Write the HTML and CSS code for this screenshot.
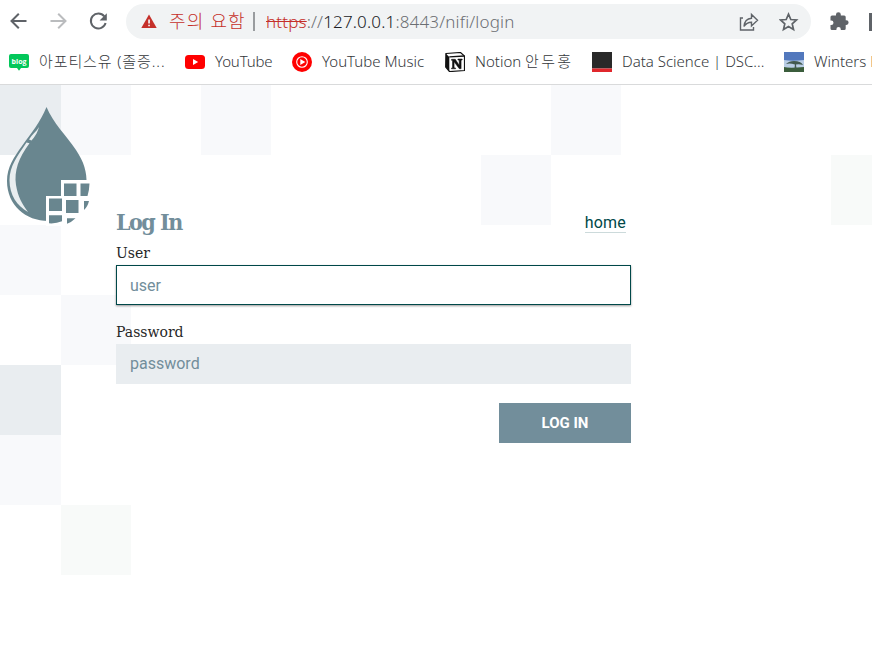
FILE: index.html
```html
<!DOCTYPE html>
<html lang="ko">
<head>
<meta charset="utf-8">
<title>NiFi Login</title>
<link rel="stylesheet" href="styles.css">
</head>
<body>
<header class="browser">
  <div class="toolbar">
    <svg class="nav" width="20" height="20" viewBox="0 0 20 20" fill="none" stroke="#5f6368" stroke-width="2"><path d="M18.500 9H3.500M10.800 1.700 3.500 9l7.300 7.300"/></svg>
    <svg class="nav" width="20" height="20" viewBox="0 0 20 20" fill="none" stroke="#babcbe" stroke-width="2"><path d="M2.500 9h15M10.200 1.700 17.500 9l-7.300 7.300"/></svg>
    <svg class="nav" width="20" height="20" viewBox="0 0 20 20" fill="none" stroke="#5f6368" stroke-width="2"><path d="M16.300 4.300A7.500 7.500 0 1 0 17.600 11"/><path d="M18.800 1.200v7.200h-7.200z" fill="#5f6368" stroke="none"/></svg>
    <div class="omnibox">
      <svg width="16" height="15" viewBox="0 0 16 15"><path d="M8 .5 15.700 14H.3z" fill="#c5302a"/><path d="M7.200 5.500h1.700v4H7.200zM7.200 10.700h1.700v1.600H7.200z" fill="#f1f3f4"/></svg>
      <span class="warning">주의 요함</span>
      <span class="divider"></span>
      <span class="url"><s>https</s>://<b>127.0.0.1</b>:8443/nifi/login</span>
      <svg class="share" width="20" height="20" viewBox="0 0 20 20" fill="none" stroke="#5f6368" stroke-width="1.400"><path d="M4 6H1.500v12h13v-3"/><path d="M5 14.500c.4-5 3-8 7.500-8.300V2.500l6 5.700-6 5.700v-3.700c-3.500 0-5.700 1.300-7.500 4.300z"/></svg>
      <svg class="star" width="20" height="20" viewBox="0 0 20 20" fill="none" stroke="#5f6368" stroke-width="1.700"><path d="m9.500 2.200 2.300 5.300 5.700.5-4.300 3.800 1.300 5.600-5-3-5 3 1.300-5.600L1.500 8l5.700-.5z"/></svg>
    </div>
    <svg class="puzzle" width="20" height="20" viewBox="0 0 20 20" fill="#5f6368"><path d="M3 3.500h4V2.600a2.400 2.400 0 0 1 4.800 0v.9h3.400a1.500 1.500 0 0 1 1.500 1.500v3.300h.6a2.300 2.300 0 0 1 0 4.600h-.6v3.600a1.500 1.500 0 0 1-1.500 1.500h-3.400v-.8a2.200 2.200 0 0 0-4.400 0v.8H3A1.500 1.500 0 0 1 1.500 16.500V13h.8a2.200 2.200 0 0 0 0-4.400h-.8V5A1.500 1.500 0 0 1 3 3.500z"/></svg>
    <span class="edge"></span>
  </div>
  <nav class="bookmarks">
    <a class="bm bm-blog"><svg width="20" height="20" viewBox="0 0 20 20"><path d="M2 2h16q2 0 2 2v10q0 2-2 2h-6l-2 2.800L8 16H2q-2 0-2-2V4q0-2 2-2z" fill="#03c75a"/><text x="10" y="11.500" text-anchor="middle" class="blog">blog</text></svg><span>아포티스유 (졸증...</span></a>
    <a class="bm bm-yt"><svg width="20" height="20" viewBox="0 0 20 20"><rect y="3" width="20" height="14" rx="3.500" fill="red"/><path d="m8 7 5.200 3L8 13z" fill="#fff"/></svg><span>YouTube</span></a>
    <a class="bm bm-music"><svg width="20" height="20" viewBox="0 0 20 20"><circle cx="10" cy="10" r="10" fill="red"/><circle cx="10" cy="10" r="5.300" fill="none" stroke="#fff" stroke-width="1.100"/><path d="m8.300 7 5 3-5 3z" fill="#fff"/></svg><span>YouTube Music</span></a>
    <a class="bm bm-notion"><svg width="20" height="20" viewBox="0 0 20 20"><path d="M1 1.500 15.500.5 19.500 4v14.500L4.500 19.600.7 15z" fill="#fff" stroke="#111" stroke-width="1.200"/><path d="M.7 1.500 4.300 5v14.500L.7 15z" fill="#111"/><path d="M4.300 4.800 19.500 4" stroke="#111" stroke-width="1.300"/><path d="M6.500 7.300h3.800l3.900 6V8.200l-1.300-.3V7h4.300v.9l-1.100.3v8.500h-1.800L9.100 9.800v5.900l1.500.3v.8H6.500V16l1-.3V8.500L6.500 8.300z" fill="#111" stroke="#111" stroke-width=".5"/></svg><span>Notion <span class="hangul">안두홍</span></span></a>
    <a class="bm bm-data"><svg width="20" height="20" viewBox="0 0 20 20"><path d="M0 0h20v16.500H0z" fill="#292929"/><path d="M0 16.500h20V20H0z" fill="#e0272c"/></svg><span>Data Science | DSC...</span></a>
    <a class="bm bm-winters"><svg width="20" height="20" viewBox="0 0 20 20"><path d="M0 0h20v11H0z" fill="#5278bd"/><path d="M0 8q8 1.500 20 0v8H0z" fill="#b9cde5"/><path d="M0 15q5 1.500 20 0v5H0z" fill="#3b5d3c"/><path d="M2 12q3-3 8-3 7 0 9 4-4-1.300-7-.5l.5 4.500h-2l.4-4.500Q6 11 2 12z" fill="#42594f"/></svg><span>Winters Blog</span></a>
  </nav>
</header>
<main class="page">
  <div class="tiles" aria-hidden="true">
    <i class="dark r1 c1"></i><i class="r1 c2"></i><i class="r1 c4"></i><i class="r1 c9"></i>
    <i class="r2 c8"></i><i class="green r2 c13"></i><i class="r3 c1"></i><i class="r4 c2"></i>
    <i class="dark r5 c1"></i><i class="r6 c1"></i><i class="green r7 c2"></i>
  </div>
  <svg class="logo" width="96" height="146" viewBox="0 0 96 146">
    <path d="M46.500 22C53 38 66 50 76 65c8 12 11 22 10.500 34 0 22-18 37-38 37-23 0-41.500-16-41.500-40 0-14 7-24 15-35C31 48 40 38 46.500 22z" fill="#69868f"/>
    <path d="M39 42C37 49 34.500 52 31.500 55.500L29 54.500c3-5 7.500-8 10-12.500zM26.500 57.500l3 .8C18.500 73 14 86 16 100c2 12 6 19 12 27C17 121 9.500 110 9.500 95c0-14 8.500-25 17-37.500z" fill="#e9eef0"/>
    <path d="M61 95h30v46H46v-30h15z" fill="#fff"/>
    <path d="M64 98.500h12.500V111H64zM80.500 98.500h9q-.2 7-2 12.500h-7zM49 113.500h13V126H49zM66 115h12.500v13H66zM84 116h5q-1.500 6-5 9zM49 130.300h13v6q-6 2.500-13 2zM67 133.300h8.500q-4 4-8.500 5.500z" fill="#69868f"/>
  </svg>
  <form class="login">
    <div class="heading"><h1>Log In</h1><a class="home">home</a></div>
    <label for="user">User</label>
    <input class="focused" id="user" type="text" placeholder="user">
    <label for="password">Password</label>
    <input id="password" type="password" placeholder="password">
    <button type="button">LOG IN</button>
  </form>
</main>
</body>
</html>
```
FILE: styles.css
```css
* { box-sizing: border-box; }
body { margin: 0; height: 649px; overflow: hidden; background: #fff; font-family: Roboto, sans-serif; }
svg { display: block; flex: none; }
.browser { height: 85px; border-bottom: 1px solid #d9dadb; overflow: hidden; font-family: "Noto Sans", "Noto Sans CJK KR", sans-serif; font-weight: 300; }
.toolbar { display: flex; align-items: center; height: 43px; padding-left: 8px; }
.nav { margin-right: 20px; }
.omnibox { display: flex; align-items: center; flex: none; width: 685px; height: 35px; margin-left: -2px; padding: 0 12px 0 15px; border-radius: 18px; background: #f1f3f4; white-space: nowrap; }
.warning { width: 76px; margin: -3px 0 0 12px; font-family: "Noto Sans CJK KR", sans-serif; font-size: 18px; letter-spacing: 1.1px; color: #c5302a; }
.divider { width: 2px; height: 19px; margin: 0 11px 0 8px; background: #999c9f; }
.url { flex: 1; font-size: 17px; letter-spacing: .17px; color: #6b6e72; }
.url s { color: #c5302a; }
.url b { font-weight: 300; color: #202124; }
.star { margin-left: 20px; }
.puzzle { margin-left: 18px; }
.edge { flex: none; width: 4px; height: 18px; margin-left: 20px; background: #5f6368; }
.bookmarks { display: flex; height: 38px; padding-left: 9px; }
.bm { display: flex; align-items: center; flex: none; gap: 10px; font-size: 15px; color: #33363a; white-space: nowrap; }
.bm > span { margin-top: -2px; }
.blog { font: 700 7px "Open Sans", sans-serif; letter-spacing: 0; fill: #fff; }
.bm-blog { width: 176px; letter-spacing: .9px; }
.bm-blog > span, .bm-notion > span { margin-top: -4px; }
.hangul { letter-spacing: 2.3px; }
.bm-yt { width: 107px; letter-spacing: -.15px; }
.bm-music { width: 153px; }
.bm-notion { width: 147px; }
.bm-data { width: 192px; }
.page { position: relative; height: 564px; overflow: hidden; padding: 120px 0 0 116px; }
.tiles { position: absolute; inset: 0; display: grid; grid-template-columns: 61px repeat(12, 70px); grid-template-rows: repeat(8, 70px); }
.tiles i { background: #f8f9fb; }
.tiles .dark { background: #e9edf0; }
.tiles .green { background: #f8faf9; }
.r1 { grid-row: 1; } .r2 { grid-row: 2; } .r3 { grid-row: 3; } .r4 { grid-row: 4; } .r5 { grid-row: 5; } .r6 { grid-row: 6; } .r7 { grid-row: 7; }
.c1 { grid-column: 1; } .c2 { grid-column: 2; } .c4 { grid-column: 4; } .c8 { grid-column: 8; } .c9 { grid-column: 9; } .c13 { grid-column: 13; }
.logo { position: absolute; left: 0; top: 0; }
.login { position: relative; display: flex; flex-direction: column; width: 515px; }
.heading { display: flex; justify-content: space-between; height: 37px; padding-right: 5px; }
h1 { margin: 0; font: 700 23px/33px "Roboto Slab", "DejaVu Serif Condensed", "DejaVu Serif", serif; font-stretch: condensed; color: #728e9b; letter-spacing: -1.5px; }
.home { height: 19px; margin-top: 9px; border-bottom: 1px solid #ccdadb; font-size: 16px; line-height: 18px; letter-spacing: .2px; color: #004849; }
label { height: 23px; font: 14px/22px "Roboto Slab", "DejaVu Serif", serif; color: #262626; }
input { width: 100%; height: 40px; margin: 0; padding: 0 14px; border: 0; border-radius: 0; outline: 0; background: #e9edf0; font: 16px Roboto, sans-serif; }
input::placeholder { color: #728e9b; opacity: 1; }
.focused { margin-bottom: 16px; padding: 0 13px; border: 1px solid #004849; background: #fff; box-shadow: 0 1px 2px rgba(0,0,0,.4); }
#password { padding-bottom: 1px; }
button { align-self: flex-end; width: 132px; height: 40px; margin-top: 19px; padding: 0; border: 0; background: #728e9b; color: #fff; font: 700 15px Roboto, sans-serif; }
```
